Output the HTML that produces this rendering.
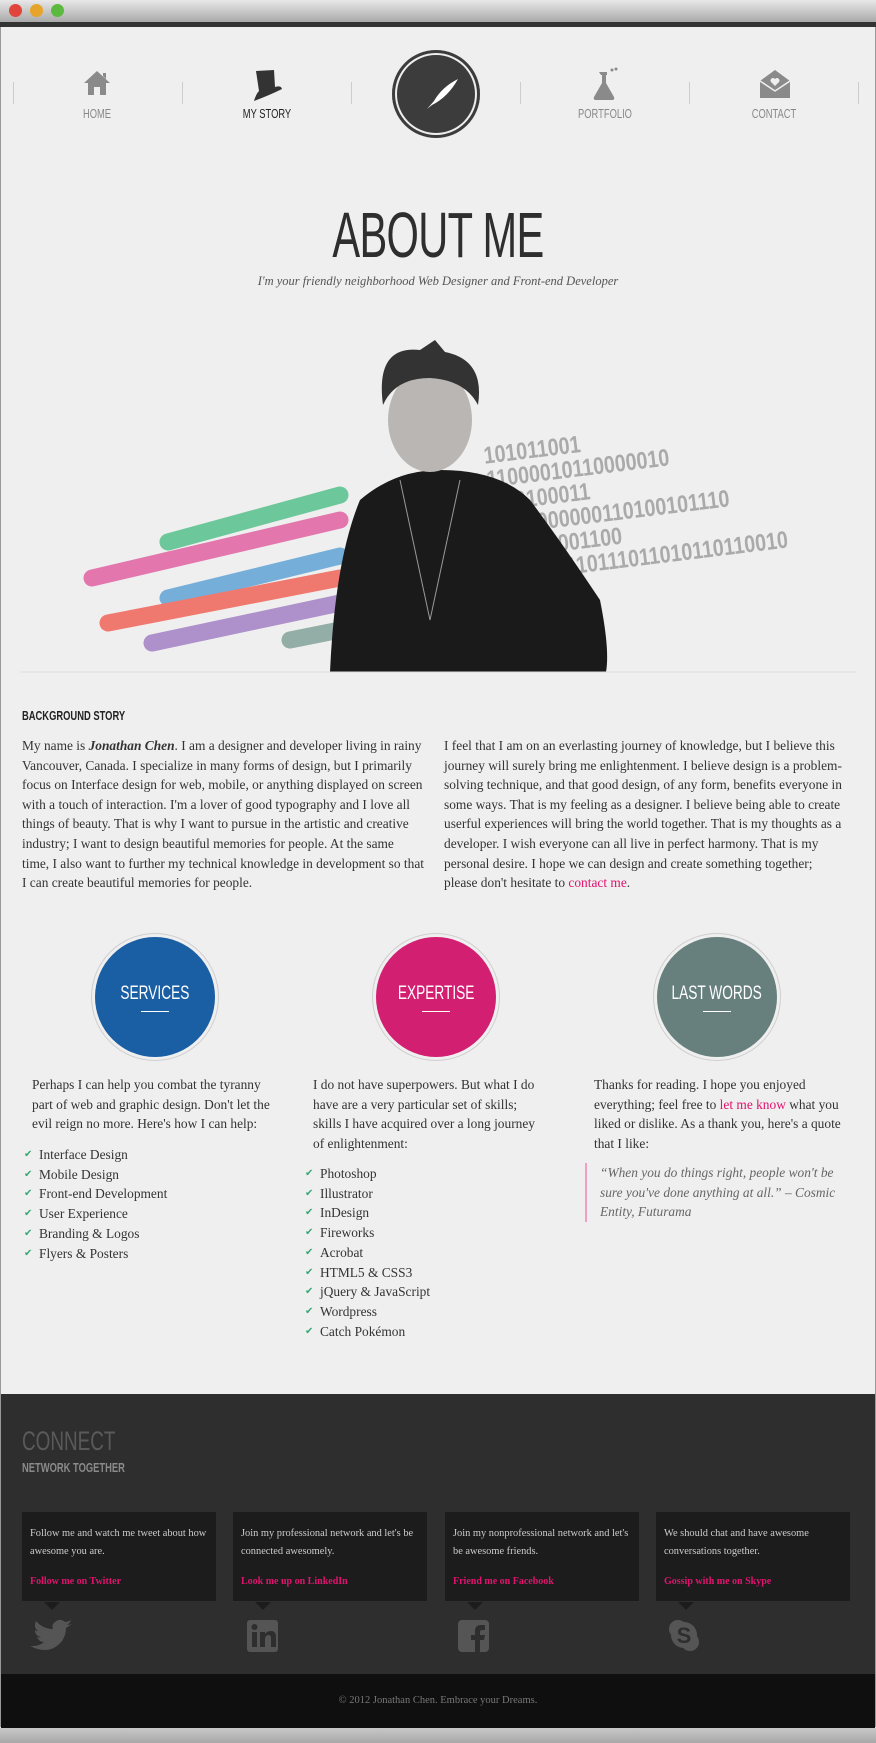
<!DOCTYPE html>
<html><head><meta charset="utf-8"><style>
*{margin:0;padding:0;box-sizing:border-box}
body{width:876px;height:1743px;background:#efefef;font-family:"Liberation Serif",serif;color:#333;position:relative;overflow:hidden}
.abs{position:absolute}
.cond{font-family:"Liberation Sans Narrow","Liberation Sans",sans-serif;}
.titlebar{left:0;top:0;width:876px;height:22px;background:linear-gradient(#e8e8e8,#a9a9a9)}
.dot{top:4px;width:13px;height:13px;border-radius:50%}
.navlbl{top:106px;font-size:13px;color:#888;text-align:center;width:120px;transform:scaleX(.72)}
.sep{top:82px;width:1px;height:22px;background:#ccc}
p.t{font-size:13.4px;line-height:19.6px;color:#333}
.pink{color:#e0136e}
.circ{width:120px;height:120px;border-radius:50%;display:flex;align-items:center;justify-content:center;flex-direction:column;color:#fff;font-size:19px;box-shadow:0 0 0 3px #efefef,0 0 0 4px #cfcfcf}
.circ span{display:block;transform:scaleX(.72);white-space:nowrap}
.circ i{display:block;width:28px;height:1px;background:#fff;margin-top:6px}
ul{list-style:none}
li{font-size:13.4px;line-height:19.7px;padding-left:15px;position:relative}
li:before{content:"✔";position:absolute;left:0;top:0;color:#3aa776;font-size:10px}
.box{top:1512px;width:194px;height:89px;background:#1c1c1c;color:#ccc;font-size:10.4px;line-height:17.6px;padding:13px 8px}
.box b{position:absolute;left:8px;top:61px;color:#e0136e;font-weight:bold;font-size:10px}
.box:after{content:"";position:absolute;left:22px;bottom:-9px;border:8px solid transparent;border-top-color:#1c1c1c;border-bottom:0}
</style></head><body>
<div class="abs titlebar"></div>
<div class="abs dot" style="left:9px;background:#e0443a"></div>
<div class="abs dot" style="left:30px;background:#e6a42a"></div>
<div class="abs dot" style="left:51px;background:#5cb940"></div>
<div class="abs" style="left:0;top:22px;width:876px;height:5px;background:#333"></div>
<div class="abs" style="left:0;top:27px;width:1px;height:1700px;background:#999"></div>
<div class="abs" style="right:0;top:27px;width:1px;height:1700px;background:#999"></div>

<!-- nav -->
<div class="abs sep" style="left:13px"></div><div class="abs sep" style="left:182px"></div><div class="abs sep" style="left:351px"></div><div class="abs sep" style="left:520px"></div><div class="abs sep" style="left:689px"></div><div class="abs sep" style="left:858px"></div>
<svg class="abs" style="left:82px;top:70px" width="30" height="26" viewBox="0 0 30 26"><path d="M15 1 L28 13 L24 13 L24 25 L18 25 L18 17 L12 17 L12 25 L6 25 L6 13 L2 13 Z M21 3 h3 v6 l-3 -3z" fill="#8a8a8a"/></svg>
<svg class="abs" style="left:248px;top:67px" width="36" height="36" viewBox="0 0 36 36"><path d="M8 4 L26 3 L27 20 Q33 18 34 22 Q22 28 6 34 Q8 27 11 24 Z" fill="#333"/></svg>
<svg class="abs" style="left:590px;top:66px" width="30" height="36" viewBox="0 0 30 36"><path d="M9 6 h8 v3 h-1 v8 l8 14 q1 3 -2 3 h-16 q-3 0 -2 -3 l8 -14 v-8 h-1z" fill="#8a8a8a"/><circle cx="22" cy="4" r="1.5" fill="#8a8a8a"/><circle cx="26" cy="3" r="1.5" fill="#8a8a8a"/></svg>
<svg class="abs" style="left:759px;top:69px" width="32" height="30" viewBox="0 0 32 30"><path d="M16 1 L31 12 V29 H1 V12 Z" fill="#8a8a8a"/><path d="M1 12 L16 22 L31 12" stroke="#efefef" stroke-width="1.5" fill="none"/><path d="M16 17 l-4 -4 a2.5 2.5 0 0 1 4 -3 a2.5 2.5 0 0 1 4 3z" fill="#efefef"/></svg>
<div class="abs navlbl cond" style="left:37px">HOME</div>
<div class="abs navlbl cond" style="left:207px;color:#222">MY STORY</div>
<div class="abs navlbl cond" style="left:545px">PORTFOLIO</div>
<div class="abs navlbl cond" style="left:714px">CONTACT</div>
<div class="abs" style="left:392px;top:50px;width:88px;height:88px;border-radius:50%;background:#3c3c3c;box-shadow:inset 0 0 0 3px #3c3c3c,inset 0 0 0 5px #eee"></div>
<svg class="abs" style="left:412px;top:75px" width="50" height="40" viewBox="0 0 50 40"><path d="M46 4 Q30 12 22 26 L15 34 L20 30 Q36 22 46 4Z" fill="#fff"/></svg>

<!-- heading -->
<div class="abs cond" style="left:0;top:198px;width:876px;text-align:center;font-size:64px;color:#2e2e2e;letter-spacing:-1px;transform:scaleX(.65)">ABOUT ME</div>
<div class="abs" style="left:0;top:274px;width:876px;text-align:center;font-size:12.5px;font-style:italic;color:#555">I'm your friendly neighborhood Web Designer and Front-end Developer</div>

<!-- hero -->
<svg class="abs" style="left:0;top:340px" width="876" height="335" viewBox="0 340 876 335">
<g stroke-linecap="round" stroke-width="17" opacity=".9">
<line x1="168" y1="542" x2="340" y2="495" stroke="#5ec391"/>
<line x1="92" y1="578" x2="340" y2="520" stroke="#e16aa6"/>
<line x1="168" y1="598" x2="340" y2="556" stroke="#6aa8d8"/>
<line x1="108" y1="623" x2="340" y2="578" stroke="#ef6d62"/>
<line x1="152" y1="643" x2="340" y2="603" stroke="#a886c6"/>
<line x1="290" y1="640" x2="340" y2="630" stroke="#8aa8a0"/>
</g>
<g font-family="Liberation Sans Narrow,Liberation Sans,sans-serif" font-size="24" font-weight="bold" fill="#aaa" transform="rotate(-7 600 500) translate(490 0) scale(.82 1) translate(-490 0)">
<text x="490" y="450">101011001</text>
<text x="490" y="474">11000010110000010</text>
<text x="508" y="498">10100011</text>
<text x="518" y="522">10000000110100101110</text>
<text x="540" y="546">00001100</text>
<text x="560" y="570">0110111011010110110010</text>
</g>
<path d="M330 672 Q335 560 360 500 Q395 470 440 470 Q500 470 530 500 Q560 540 600 600 Q610 650 606 672Z" fill="#1a1a1a"/>
<ellipse cx="430" cy="420" rx="42" ry="52" fill="#b9b6b3"/>
<path d="M383 405 Q375 345 420 350 L435 340 L445 352 Q485 360 478 405 Q465 380 430 378 Q395 378 383 405Z" fill="#333"/>
<path d="M400 480 L430 620 L460 480" stroke="#999" fill="none"/>
<line x1="20" y1="672" x2="856" y2="672" stroke="#ddd"/>
</svg>

<!-- story -->
<div class="abs cond" style="left:22px;top:709px;font-size:12.5px;font-weight:bold;color:#222;transform:scaleX(.75);transform-origin:left">BACKGROUND STORY</div>
<p class="abs t" style="left:22px;top:736px;width:402px">My name is <b><i>Jonathan Chen</i></b>. I am a designer and developer living in rainy Vancouver, Canada. I specialize in many forms of design, but I primarily focus on Interface design for web, mobile, or anything displayed on screen with a touch of interaction. I'm a lover of good typography and I love all things of beauty. That is why I want to pursue in the artistic and creative industry; I want to design beautiful memories for people. At the same time, I also want to further my technical knowledge in development so that I can create beautiful memories for people.</p>
<p class="abs t" style="left:444px;top:736px;width:404px">I feel that I am on an everlasting journey of knowledge, but I believe this journey will surely bring me enlightenment. I believe design is a problem-solving technique, and that good design, of any form, benefits everyone in some ways. That is my feeling as a designer. I believe being able to create userful experiences will bring the world together. That is my thoughts as a developer. I wish everyone can all live in perfect harmony. That is my personal desire. I hope we can design and create something together; please don't hesitate to <span class="pink">contact me</span>.</p>

<!-- circles -->
<div class="abs circ cond" style="left:95px;top:937px;background:#1a5ea4"><span>SERVICES</span><i></i></div>
<div class="abs circ cond" style="left:376px;top:937px;background:#d21f71"><span>EXPERTISE</span><i></i></div>
<div class="abs circ cond" style="left:657px;top:937px;background:#67807e"><span>LAST WORDS</span><i></i></div>

<p class="abs t" style="left:32px;top:1075px;width:245px">Perhaps I can help you combat the tyranny part of web and graphic design. Don't let the evil reign no more. Here's how I can help:</p>
<ul class="abs" style="left:24px;top:1145px"><li>Interface Design</li><li>Mobile Design</li><li>Front-end Development</li><li>User Experience</li><li>Branding &amp; Logos</li><li>Flyers &amp; Posters</li></ul>
<p class="abs t" style="left:313px;top:1075px;width:232px">I do not have superpowers. But what I do have are a very particular set of skills; skills I have acquired over a long journey of enlightenment:</p>
<ul class="abs" style="left:305px;top:1164px"><li>Photoshop</li><li>Illustrator</li><li>InDesign</li><li>Fireworks</li><li>Acrobat</li><li>HTML5 &amp; CSS3</li><li>jQuery &amp; JavaScript</li><li>Wordpress</li><li>Catch Pokémon</li></ul>
<p class="abs t" style="left:594px;top:1075px;width:255px">Thanks for reading. I hope you enjoyed everything; feel free to <span class="pink">let me know</span> what you liked or dislike. As a thank you, here's a quote that I like:</p>
<p class="abs t" style="left:585px;top:1163px;width:270px;border-left:2px solid #f0a0c4;padding-left:13px;font-style:italic;color:#666">“When you do things right, people won't be sure you've done anything at all.” – Cosmic Entity, Futurama</p>

<!-- footer -->
<div class="abs" style="left:1px;top:1394px;width:874px;height:280px;background:#2e2e2e"></div>
<div class="abs cond" style="left:22px;top:1426px;font-size:27px;color:#5a5a5a;transform:scaleX(.7);transform-origin:left">CONNECT</div>
<div class="abs cond" style="left:22px;top:1461px;font-size:12.5px;color:#8a8a8a;font-weight:bold;transform:scaleX(.75);transform-origin:left">NETWORK TOGETHER</div>
<div class="abs box" style="left:22px">Follow me and watch me tweet about how awesome you are.<b>Follow me on Twitter</b></div>
<div class="abs box" style="left:233px">Join my professional network and let's be connected awesomely.<b>Look me up on LinkedIn</b></div>
<div class="abs box" style="left:445px">Join my nonprofessional network and let's be awesome friends.<b>Friend me on Facebook</b></div>
<div class="abs box" style="left:656px">We should chat and have awesome conversations together.<b>Gossip with me on Skype</b></div>
<svg class="abs" style="left:30px;top:1618px" width="44" height="34" viewBox="0 0 44 34"><path d="M42 6 q-3 1 -5 1 q3 -2 4 -5 q-3 2 -6 2 q-6 -5 -12 2 q-1 2 0 5 q-10 0 -17 -8 q-3 6 2 10 q-2 0 -3 -1 q0 6 6 7 q-2 1 -4 0 q2 5 7 5 q-6 5 -14 4 q20 10 32 -5 q4 -6 4 -13 q3 -2 6 -4z" fill="#555"/></svg>
<svg class="abs" style="left:247px;top:1620px" width="32" height="32" viewBox="0 0 32 32"><rect width="31" height="32" rx="3" fill="#555"/><rect x="5" y="12" width="5" height="15" fill="#2e2e2e"/><circle cx="7.5" cy="7" r="3" fill="#2e2e2e"/><path d="M13 12h5v2q2-3 6-3q5 0 5 6v10h-5v-9q0-3-2.5-3t-3.5 3v9h-5z" fill="#2e2e2e"/></svg>
<svg class="abs" style="left:458px;top:1620px" width="32" height="32" viewBox="0 0 32 32"><rect width="31" height="32" rx="4" fill="#555"/><path d="M17 32v-12h-4v-5h4v-4q0-6 6-6h4v5h-3q-2 0-2 2v3h5l-1 5h-4v12z" fill="#2e2e2e"/></svg>
<svg class="abs" style="left:667px;top:1618px" width="36" height="36" viewBox="0 0 36 36"><circle cx="11" cy="11" r="9" fill="#555"/><circle cx="23" cy="24" r="9" fill="#555"/><circle cx="17" cy="17" r="13" fill="#555"/><text x="17" y="25" text-anchor="middle" font-family="Liberation Sans" font-weight="bold" font-size="22" fill="#2e2e2e">S</text></svg>
<div class="abs" style="left:1px;top:1674px;width:874px;height:54px;background:#0f0f0f;color:#777;font-size:10.5px;text-align:center;line-height:54px">© 2012 Jonathan Chen. Embrace your Dreams.</div>
<div class="abs" style="left:0;top:1728px;width:876px;height:15px;background:linear-gradient(#c8c8c8,#a8a8a8)"></div>
</body></html>
